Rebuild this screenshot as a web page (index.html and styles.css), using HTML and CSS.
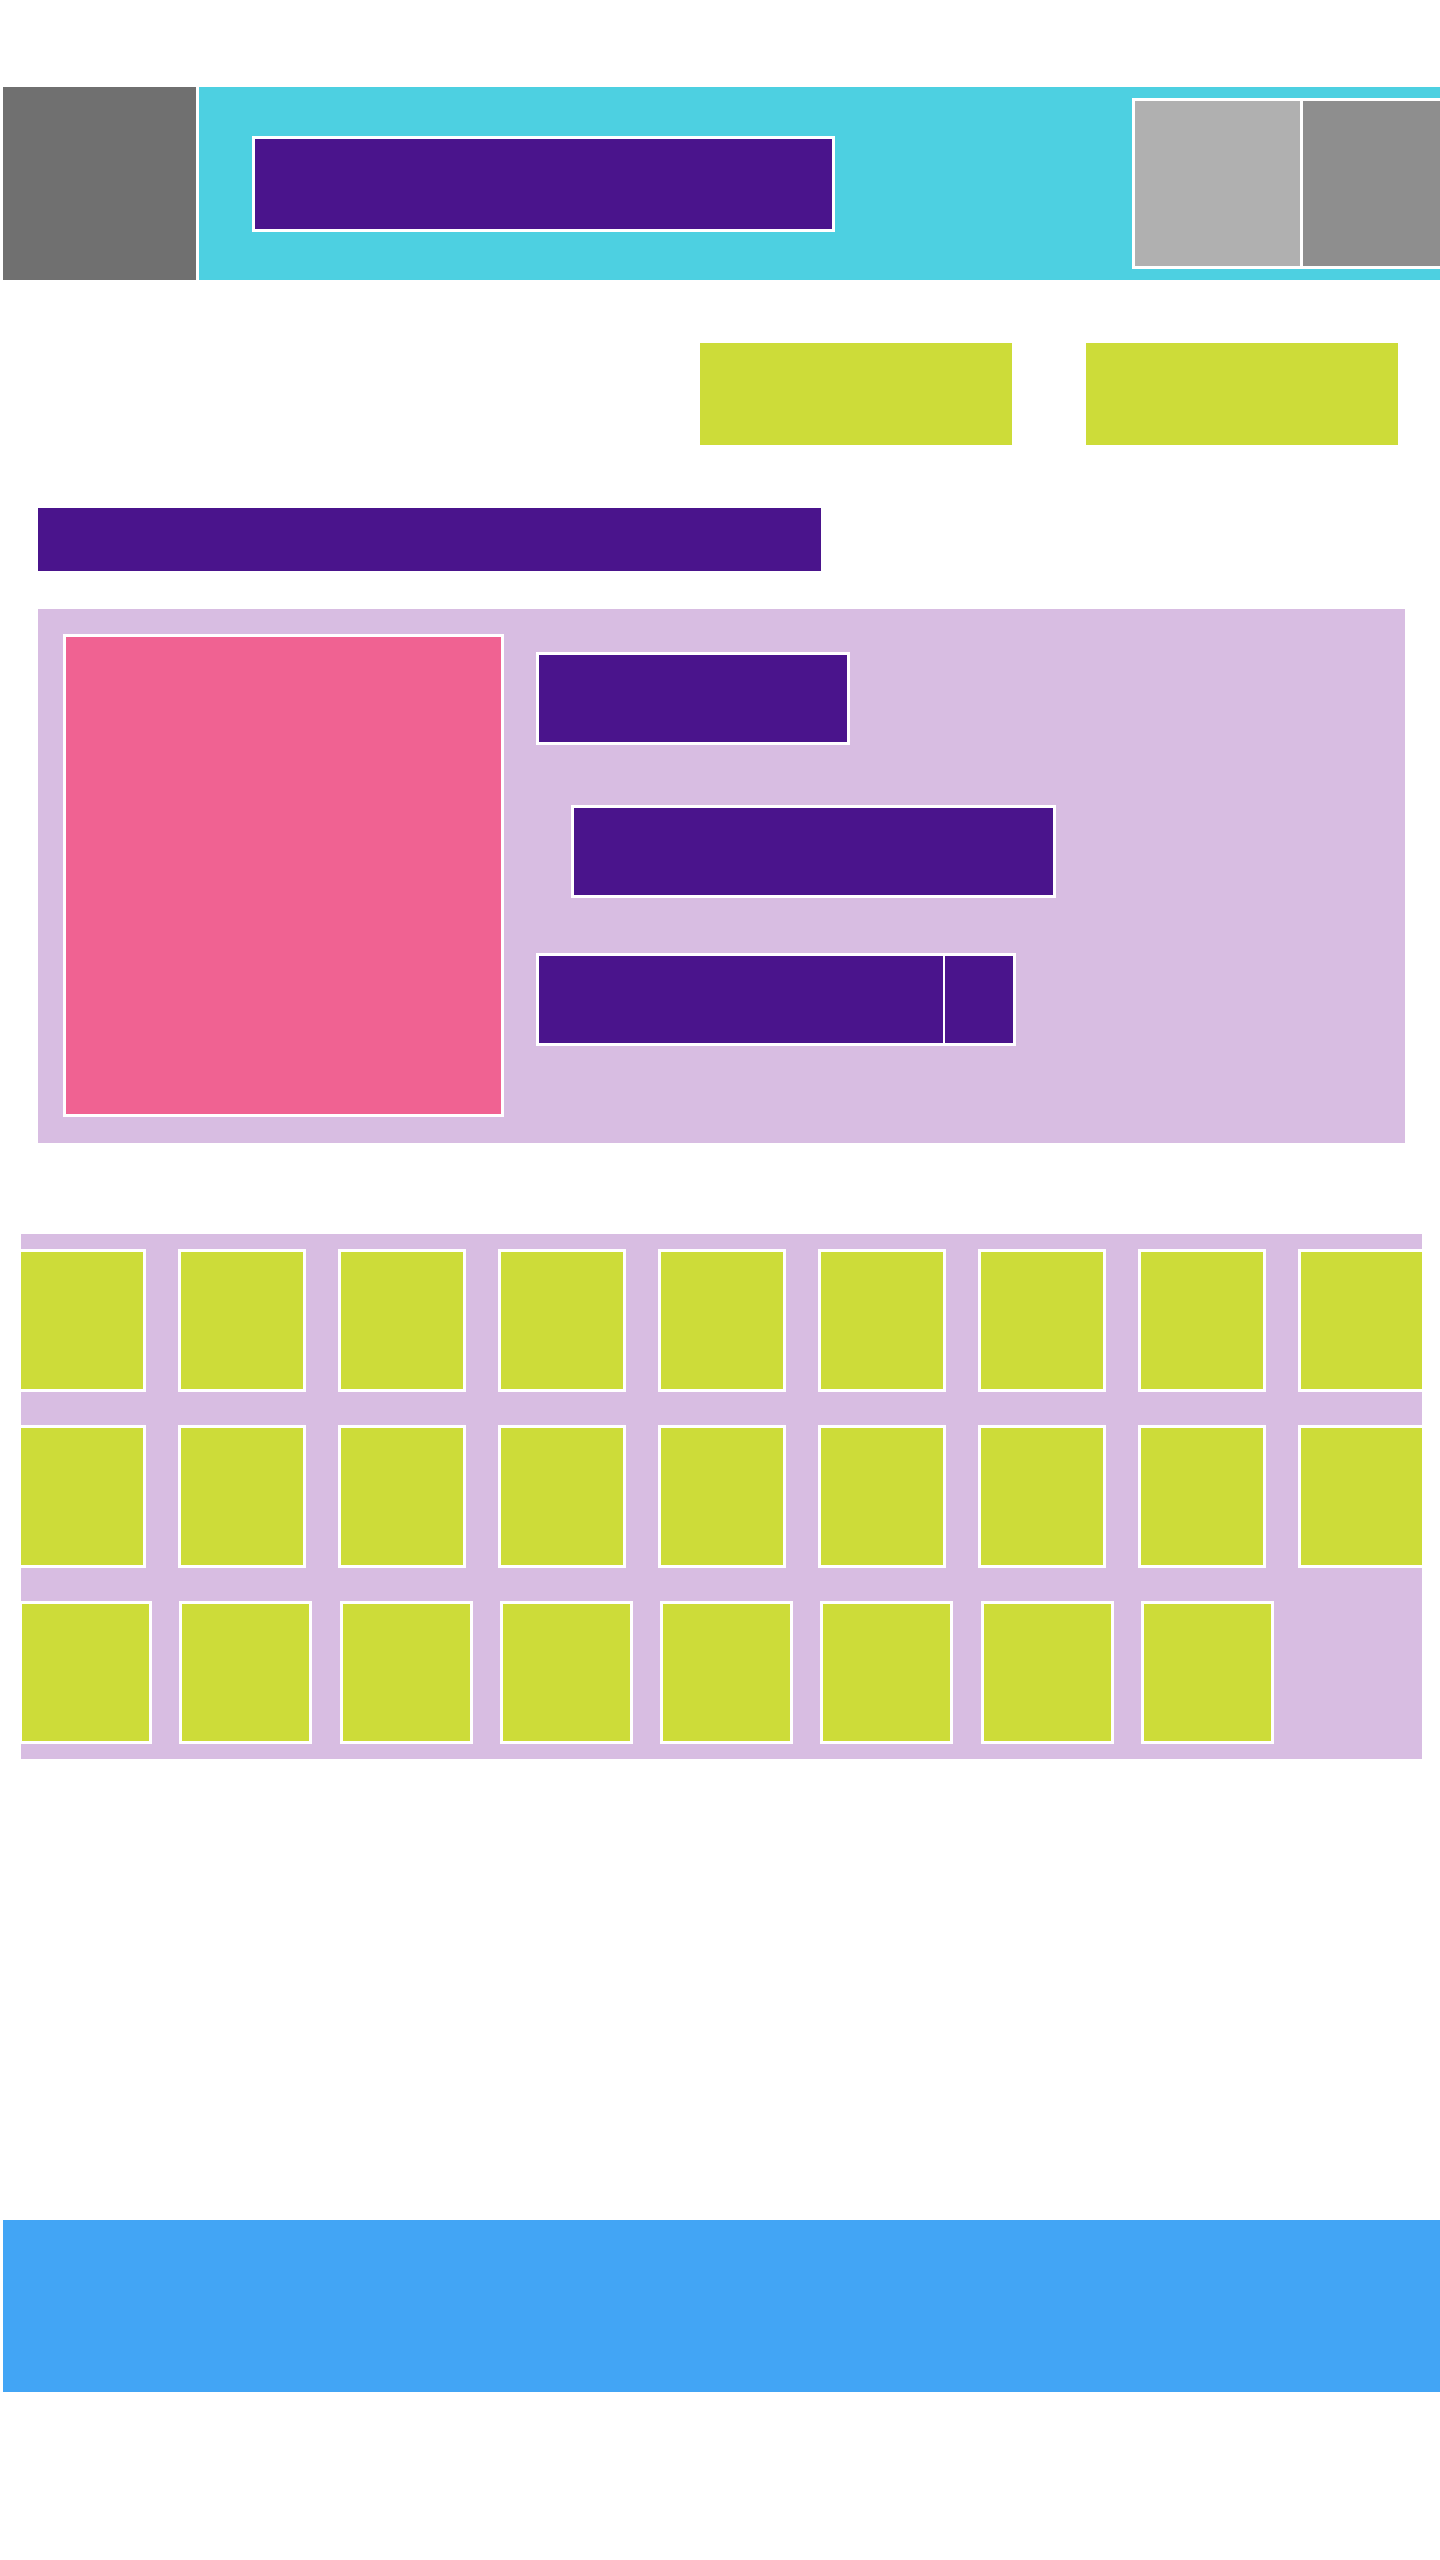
FILE: index.html
```html
<!DOCTYPE html>
<html lang="en">
<head>
  <meta charset="UTF-8" />
  <meta name="viewport" content="width=device-width, initial-scale=1.0"/>
  <title>Layout</title>
  <link rel="stylesheet" href="styles.css">
</head>
<body>
  <header class="topbar">
    <div class="logo"></div>
    <div class="nav">
      <div class="title"></div>
      <div class="thumbs">
        <div class="thumb light"></div>
        <div class="thumb dark"></div>
      </div>
    </div>
  </header>

  <div class="actions">
    <div class="action"></div>
    <div class="action"></div>
  </div>

  <div class="heading"></div>

  <section class="feature">
    <div class="poster"></div>
    <div class="details">
      <div class="line short"></div>
      <div class="line wide"></div>
      <div class="split">
        <div class="split-main"></div>
        <div class="split-side"></div>
      </div>
    </div>
  </section>

  <section class="grid">
    <div class="row" id="row1"></div>
    <div class="row" id="row2"></div>
    <div class="row last" id="row3"></div>
  </section>

  <footer class="band"></footer>

  <script>
    // fill the tile rows
    const counts = { row1: 9, row2: 9, row3: 8 };
    for (const id in counts) {
      const row = document.getElementById(id);
      for (let i = 0; i < counts[id]; i++) {
        const tile = document.createElement('div');
        tile.className = 'tile';
        row.appendChild(tile);
      }
    }
  </script>
</body>
</html>
```

FILE: styles.css
```css
html, body { overflow-x: hidden; }
body {
  margin: 0;
  background: #fff;
  font-family: 'Liberation Sans', Arial, sans-serif;
}

/* top bar */
.topbar {
  display: flex;
  margin: 87px 0 0 3px;
  height: 193px;
  overflow: hidden;
}
.logo {
  flex: 0 0 193px;
  background: #707070;
  border-right: 3px solid #fff;
}
.nav {
  flex: 1;
  display: flex;
  align-items: center;
  background: #4dd0e1;
  padding-left: 53px;
}
.title {
  flex: 0 0 auto;
  width: 577px;
  height: 90px;
  background: #4a148c;
  border: 3px solid #fff;
}
.thumbs {
  flex: 0 0 auto;
  display: flex;
  margin-left: 297px;
  border: 3px solid #fff;
  background: #fff;
  gap: 3px;
}
.thumb { width: 165px; height: 165px; }
.thumb.light { background: #b0b0b0; }
.thumb.dark { background: #8e8e8e; }

/* buttons */
.actions {
  display: flex;
  justify-content: flex-end;
  gap: 74px;
  margin: 63px 42px 0 0;
}
.action { width: 312px; height: 102px; background: #cddc39; }

.heading {
  width: 783px;
  height: 63px;
  margin: 63px 0 0 38px;
  background: #4a148c;
}

/* feature card */
.feature {
  display: flex;
  width: 1367px;
  height: 534px;
  box-sizing: border-box;
  margin: 38px 0 0 38px;
  padding: 25px 25px;
  background: #d8bde2;
}
.poster {
  width: 435px;
  height: 477px;
  background: #f06292;
  border: 3px solid #fff;
}
.details {
  display: flex;
  flex-direction: column;
  align-items: flex-start;
  padding: 18px 0 0 32px;
}
.line {
  height: 87px;
  background: #4a148c;
  border: 3px solid #fff;
}
.line.short { width: 308px; }
.line.wide { width: 479px; margin: 60px 0 0 35px; }
.split {
  display: flex;
  margin-top: 55px;
  border: 3px solid #fff;
  background: #fff;
  gap: 2px;
}
.split-main { width: 404px; height: 87px; background: #4a148c; }
.split-side { width: 68px; height: 87px; background: #4a148c; }

/* tile grid */
.grid {
  display: flex;
  flex-direction: column;
  gap: 33px;
  width: 1401px;
  margin: 91px 0 0 21px;
  padding: 15px 0;
  background: #d8bde2;
  overflow: hidden;
}
.row {
  display: flex;
  justify-content: center;
  gap: 32px;
}
.row.last {
  justify-content: flex-start;
  gap: 27.3px;
  margin-left: -2px;
}
.tile {
  flex: 0 0 auto;
  width: 122px;
  height: 137px;
  background: #cddc39;
  border: 3px solid #fff;
}
.row.last .tile { width: 127px; }

.band {
  height: 172px;
  margin: 461px 0 0 3px;
  background: #42a5f5;
}
```
